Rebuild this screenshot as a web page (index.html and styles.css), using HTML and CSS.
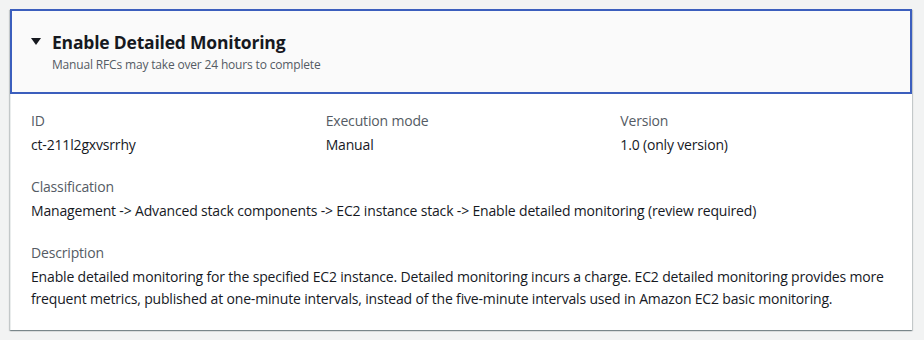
FILE: index.html
```html
<!DOCTYPE html>
<html lang="en">
<head>
<meta charset="utf-8">
<title>Enable Detailed Monitoring</title>
<link rel="stylesheet" href="styles.css">
</head>
<body>
<div class="page">
  <section class="card">
    <header class="card-header">
      <div class="title-row">
        <svg class="caret" width="10" height="7" viewBox="0 0 10 7" aria-hidden="true"><polygon points="0,0 10,0 5,7" fill="#16191f"/></svg>
        <h2 class="title">Enable Detailed Monitoring</h2>
      </div>
      <p class="subtitle">Manual RFCs may take over 24 hours to complete</p>
    </header>
    <div class="card-body">
      <div class="grid">
        <div class="field">
          <div class="label">ID</div>
          <div class="value">ct-211l2gxvsrrhy</div>
        </div>
        <div class="field">
          <div class="label">Execution mode</div>
          <div class="value">Manual</div>
        </div>
        <div class="field">
          <div class="label">Version</div>
          <div class="value">1.0 (only version)</div>
        </div>
      </div>
      <div class="field">
        <div class="label">Classification</div>
        <div class="value">Management -&gt; Advanced stack components -&gt; EC2 instance stack -&gt; Enable detailed monitoring (review required)</div>
      </div>
      <div class="field">
        <div class="label">Description</div>
        <div class="value">Enable detailed monitoring for the specified EC2 instance. Detailed monitoring incurs a charge. EC2 detailed monitoring provides more frequent metrics, published at one-minute intervals, instead of the five-minute intervals used in Amazon EC2 basic monitoring.</div>
      </div>
    </div>
  </section>
</div>
</body>
</html>
```
FILE: styles.css
```css
html, body {
  margin: 0;
  padding: 0;
  background: #f2f3f3;
}
body {
  font-family: "Open Sans", "Noto Sans", Arial, sans-serif;
  color: #16191f;
  font-size: 14px;
  line-height: 22px;
  letter-spacing: -0.17px;
}
.page {
  padding: 9px 12px 10px 10px;
}
.card {
  background: #ffffff;
  box-shadow: 0 1px 1px 0 rgba(0, 28, 36, 0.3), 1px 1px 1px 0 rgba(0, 28, 36, 0.15), -1px 1px 1px 0 rgba(0, 28, 36, 0.15);
  border-left: 1px solid #eaeded;
}
.card-header {
  background: #fafafa;
  border: 2px solid #3b5ebd;
  margin-left: -1px;
  padding: 19px 20px 19px 19px;
}
.title-row {
  display: flex;
  align-items: center;
  gap: 11px;
}
.caret {
  display: block;
  flex: none;
  margin-top: -1px;
}
.title {
  margin: 0;
  font-size: 17.5px;
  line-height: 24px;
  font-weight: 700;
  letter-spacing: -0.2px;
  color: #16191f;
}
.subtitle {
  margin: 3px 0 0 21px;
  font-size: 12px;
  line-height: 16px;
  color: #545b64;
}
.card-body {
  padding: 16px 20px 20px 20px;
  display: flex;
  flex-direction: column;
  gap: 20px;
}
.grid {
  display: grid;
  grid-template-columns: repeat(3, 1fr);
  column-gap: 23px;
}
.field {
  display: flex;
  flex-direction: column;
  gap: 2px;
}
.label {
  color: #545b64;
}
.value {
  color: #16191f;
}
```
